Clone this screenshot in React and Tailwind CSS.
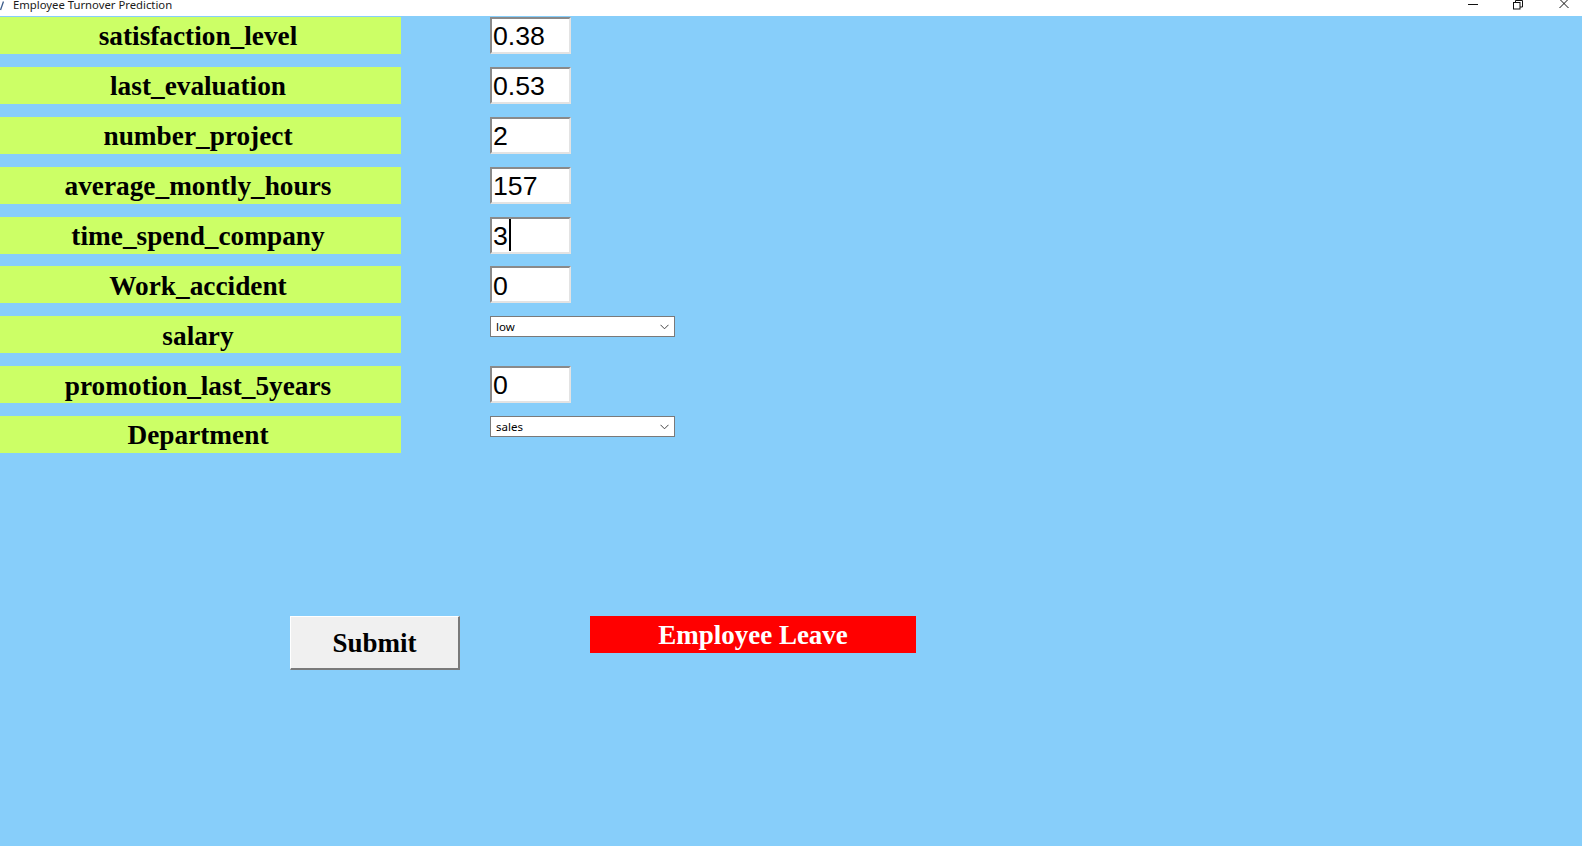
import React from "react";

const rows = [
  { label: "satisfaction_level", value: "0.38" },
  { label: "last_evaluation", value: "0.53" },
  { label: "number_project", value: "2" },
  { label: "average_montly_hours", value: "157" },
  { label: "time_spend_company", value: "3", caret: true },
  { label: "Work_accident", value: "0" },
  { label: "salary", select: "low" },
  { label: "promotion_last_5years", value: "0" },
  { label: "Department", select: "sales" },
];

function Entry({ value, caret }) {
  return (
    <div
      className="w-[81px] h-[37px] bg-white border-2 border-t-[#8a8a8a] border-l-[#8a8a8a] border-b-[#e3e3e3] border-r-[#e3e3e3] flex items-center pl-[1px] pt-[2px] text-[26.7px] leading-none text-black"
      style={{ fontFamily: '"Liberation Sans", Arial, sans-serif' }}
    >
      <span>{value}</span>
      {caret && <span className="ml-[1px] -mt-[2px] w-[2px] h-[32px] bg-black" />}
    </div>
  );
}

function Select({ value }) {
  return (
    <div
      className="w-[185px] h-[21px] bg-white border border-[#7a7a7a] flex items-center justify-between pl-[5px] pr-[5px] text-[11.5px] text-black"
      style={{ fontFamily: '"Noto Sans", "Open Sans", sans-serif' }}
    >
      <span>{value}</span>
      <svg width="9" height="6" viewBox="0 0 9 6">
        <path d="M0.5 0.8 L4.5 4.8 L8.5 0.8" fill="none" stroke="#444" strokeWidth="1" />
      </svg>
    </div>
  );
}

export default function App() {
  return (
    <div className="w-[1582px] h-[846px] bg-[#87cefa] flex flex-col overflow-hidden">
      {/* title bar */}
      <div className="h-[16px] bg-white flex items-start overflow-hidden shrink-0">
        <svg width="4" height="10" viewBox="0 0 4 10" className="mt-[1px]">
          <path d="M3.5 0.5 L0.5 9" stroke="#3b5b8a" strokeWidth="1.3" fill="none" />
        </svg>
        <span
          className="ml-[9px] mt-[-3px] text-[11.3px] leading-[16px] text-[#1a1a1a]"
          style={{ fontFamily: '"Noto Sans", "Open Sans", sans-serif' }}
        >
          Employee Turnover Prediction
        </span>
        <div className="ml-auto flex items-start">
          <svg width="10" height="10" viewBox="0 0 10 10" className="mr-[35px]">
            <path d="M0 4.5 H10" stroke="#111" strokeWidth="1" />
          </svg>
          <svg width="10" height="10" viewBox="0 0 10 10" className="mr-[36px]">
            <rect x="0.5" y="2.5" width="6.5" height="6.5" fill="none" stroke="#111" strokeWidth="1" />
            <path d="M2.5 2.5 V0.5 H9.5 V7 H7" fill="none" stroke="#111" strokeWidth="1" />
          </svg>
          <svg width="10" height="10" viewBox="0 0 10 10" className="mr-[13px]">
            <path d="M0.5 -1 L9.5 8 M9.5 -1 L0.5 8" stroke="#111" strokeWidth="1" />
          </svg>
        </div>
      </div>

      <div className="mt-[1px] flex flex-col gap-y-[12.9px]">
        {rows.map((r) => (
          <div key={r.label} className="flex items-start h-[37px]">
            <div
              className="w-[401px] h-[37px] bg-[#ccff66] flex items-center justify-center text-[27.3px] font-bold text-black leading-none pt-[3px] pr-[5px]"
              style={{ fontFamily: '"Liberation Serif", "Times New Roman", serif' }}
            >
              {r.label}
            </div>
            <div className="ml-[89px]">
              {r.select ? <Select value={r.select} /> : <Entry value={r.value} caret={r.caret} />}
            </div>
          </div>
        ))}
      </div>

      <div className="mt-[163px] flex items-start">
        <div
          className="ml-[290px] w-[170px] h-[54px] bg-[#f0f0f0] border-t border-l border-t-white border-l-white border-b-2 border-r-2 border-b-[#7a7a7a] border-r-[#7a7a7a] flex items-center justify-center pt-[2px] text-[27px] font-bold text-black"
          style={{ fontFamily: '"Liberation Serif", "Times New Roman", serif' }}
        >
          Submit
        </div>
        <div
          className="ml-[130px] w-[326px] h-[37px] bg-[#ff0000] flex items-center justify-center text-[27px] font-bold text-white leading-none pt-[1px]"
          style={{ fontFamily: '"Liberation Serif", "Times New Roman", serif' }}
        >
          Employee Leave
        </div>
      </div>
    </div>
  );
}
